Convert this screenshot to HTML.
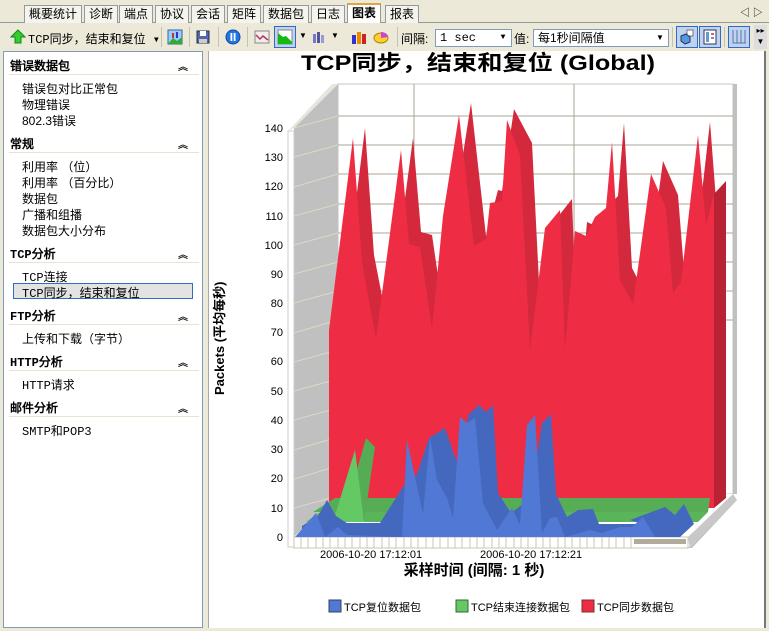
<!DOCTYPE html>
<html><head><meta charset="utf-8"><style>
*{margin:0;padding:0;box-sizing:border-box}
body{width:769px;height:631px;background:#ece9d8;font-family:"Liberation Sans","Noto Sans CJK SC",sans-serif;font-size:12px;position:relative;overflow:hidden}
.tabs{position:absolute;left:0;top:0;width:769px;height:23px;border-bottom:1px solid #919b9c}
.tab{position:absolute;top:5px;height:18px;border:1px solid #919b9c;border-bottom:none;background:#f4f3ee;font-size:12px;line-height:16px;padding:0 4px;color:#000}
.tb{position:absolute;left:0;top:23px;width:769px;height:27px;background:#ece9d8}
.left{position:absolute;left:3px;top:51px;width:200px;height:577px;background:#fff;border:1px solid #7f9db9}
.hd{position:absolute;left:6px;font-weight:bold;font-size:12px;font-family:"Liberation Mono","WenQuanYi Zen Hei",monospace}
.hl{position:absolute;left:5px;width:190px;border-top:1px solid #e8e4d4}
.it{position:absolute;left:18px;font-size:12px}
.car{position:absolute;left:174px;font-size:10px;font-weight:bold}
.chart{position:absolute;left:208px;top:51px;width:558px;height:577px;background:#fff;border-left:1px solid #aaa;border-right:2px solid #777}
.ic{position:absolute;top:29px;width:16px;height:16px}
.sep{position:absolute;top:27px;width:1px;height:20px;background:#c5c2b2}
.combo{position:absolute;top:29px;height:18px;background:#fff;border:1px solid #7f9db9;font-size:12px;line-height:16px;padding-left:4px}
.dd{position:absolute;right:1px;top:1px;width:14px;height:14px;font-size:8px;text-align:center;line-height:14px}
</style></head><body>
<div class="tabs">
<div class="tab" style="left:24px">概要统计</div>
<div class="tab" style="left:84px">诊断</div>
<div class="tab" style="left:119px">端点</div>
<div class="tab" style="left:155px">协议</div>
<div class="tab" style="left:191px">会话</div>
<div class="tab" style="left:227px">矩阵</div>
<div class="tab" style="left:263px">数据包</div>
<div class="tab" style="left:311px">日志</div>
<div class="tab" style="left:347px;top:3px;height:20px;background:#fff;font-weight:bold;border-top:2px solid #e6a23c">图表</div>
<div class="tab" style="left:385px">报表</div>
<div style="position:absolute;left:740px;top:4px;font-size:10px">◁ ▷</div>
</div>
<div class="tb">
<svg style="position:absolute;left:10px;top:6px" width="16" height="16"><polygon points="8,1 15,8 11,8 11,14 5,14 5,8 1,8" fill="#3c3" stroke="#181"/></svg>
<div style="position:absolute;left:28px;top:7px;font-size:12px;font-family:'Liberation Mono','WenQuanYi Zen Hei',monospace">TCP同步，结束和复位 ▾</div>
</div>
<div class="sep" style="left:161px"></div>
<svg class="ic" style="left:167px" viewBox="0 0 16 16"><rect x="1" y="1" width="14" height="14" fill="#9cf" stroke="#369"/><path d="M1 15 L6 9 L10 12 L15 8 V15Z" fill="#3a3"/><rect x="5" y="4" width="2" height="5" fill="#c33"/><rect x="9" y="3" width="2" height="6" fill="#33c"/></svg>
<div class="sep" style="left:189px"></div>
<svg class="ic" style="left:195px" viewBox="0 0 16 16"><rect x="2" y="2" width="12" height="12" fill="#56a" stroke="#234"/><rect x="5" y="2" width="6" height="5" fill="#fff"/><rect x="4" y="10" width="8" height="4" fill="#ccc"/></svg>
<div class="sep" style="left:218px"></div>
<svg class="ic" style="left:225px" viewBox="0 0 16 16"><circle cx="8" cy="8" r="7" fill="#27d" stroke="#14a"/><rect x="5.5" y="4" width="1.8" height="8" fill="#fff"/><rect x="8.7" y="4" width="1.8" height="8" fill="#fff"/></svg>
<div class="sep" style="left:247px"></div>
<svg class="ic" style="left:254px" viewBox="0 0 16 16"><rect x="1" y="2" width="14" height="12" fill="#eee" stroke="#888"/><path d="M2 6 L6 10 L9 7 L14 11" stroke="#b35" fill="none" stroke-width="1.5"/></svg>
<div style="position:absolute;left:274px;top:26px;width:22px;height:22px;border:1px solid #316ac5;background:#c1d2ee"></div>
<svg class="ic" style="left:277px" viewBox="0 0 16 16"><rect x="1" y="1" width="14" height="14" fill="#fff" stroke="#888"/><path d="M1 4 L6 8 L9 7 L15 13 V15 H1Z" fill="#1b1"/></svg>
<div style="position:absolute;left:299px;top:31px;font-size:8px">▼</div>
<svg class="ic" style="left:311px" viewBox="0 0 16 16"><rect x="2" y="5" width="3" height="9" fill="#77c"/><rect x="6" y="3" width="3" height="11" fill="#559"/><rect x="10" y="6" width="3" height="8" fill="#99d"/></svg>
<div style="position:absolute;left:331px;top:31px;font-size:8px">▼</div>
<svg class="ic" style="left:351px" viewBox="0 0 16 16"><rect x="1" y="6" width="4" height="9" fill="#33c"/><rect x="6" y="3" width="4" height="12" fill="#e80"/><rect x="11" y="5" width="4" height="10" fill="#c22"/></svg>
<svg class="ic" style="left:373px" viewBox="0 0 16 16"><ellipse cx="8" cy="9" rx="7" ry="5" fill="#fc3" stroke="#a80"/><path d="M8 9 L8 3 A7 5 0 0 1 15 8Z" fill="#c4c"/></svg>
<div class="sep" style="left:397px"></div>
<div style="position:absolute;left:401px;top:30px">间隔:</div>
<div class="combo" style="left:435px;width:77px;font-family:'Liberation Mono',monospace">1 sec<div class="dd">▼</div></div>
<div style="position:absolute;left:514px;top:30px">值:</div>
<div class="combo" style="left:533px;width:136px">每1秒间隔值<div class="dd">▼</div></div>
<div class="sep" style="left:672px"></div>
<div style="position:absolute;left:676px;top:26px;width:22px;height:22px;border:1px solid #316ac5;background:#c1d2ee"></div>
<svg class="ic" style="left:679px" viewBox="0 0 16 16"><rect x="8" y="1" width="6" height="6" fill="#fff" stroke="#777"/><path d="M2 7 L7 5 L11 8 L11 13 L6 15 L2 12Z" fill="#59d" stroke="#236"/></svg>
<div style="position:absolute;left:699px;top:26px;width:22px;height:22px;border:1px solid #316ac5;background:#c1d2ee"></div>
<svg class="ic" style="left:702px" viewBox="0 0 16 16"><rect x="2" y="1" width="12" height="14" fill="#fff" stroke="#336"/><rect x="4" y="3" width="3" height="10" fill="#69c"/><rect x="9" y="4" width="3" height="2" fill="#c66"/><rect x="9" y="8" width="3" height="2" fill="#69c"/></svg>
<div class="sep" style="left:724px"></div>
<div style="position:absolute;left:728px;top:26px;width:22px;height:22px;border:1px solid #316ac5;background:#c1d2ee"></div>
<svg class="ic" style="left:731px" viewBox="0 0 16 16"><path d="M2 1 V14 H15 M6 1 V14 M10 1 V14 M14 1V14" stroke="#57a" fill="none"/></svg>
<div style="position:absolute;left:754px;top:25px;width:13px;height:24px;background:#ddd;font-size:8px;text-align:center;line-height:11px">▸▸<br>▼</div>

<div class="left">
<div class="hd" style="top:5px">错误数据包</div><div class="car" style="top:6px">︽</div><div class="hl" style="top:22px"></div>
<div class="it" style="top:28px">错误包对比正常包</div>
<div class="it" style="top:44px">物理错误</div>
<div class="it" style="top:60px">802.3错误</div>
<div class="hd" style="top:83px">常规</div><div class="car" style="top:84px">︽</div><div class="hl" style="top:100px"></div>
<div class="it" style="top:106px">利用率 （位）</div>
<div class="it" style="top:122px">利用率 （百分比）</div>
<div class="it" style="top:138px">数据包</div>
<div class="it" style="top:154px">广播和组播</div>
<div class="it" style="top:170px">数据包大小分布</div>
<div class="hd" style="top:193px">TCP分析</div><div class="car" style="top:194px">︽</div><div class="hl" style="top:210px"></div>
<div class="it" style="top:216px;font-family:'Liberation Mono','WenQuanYi Zen Hei',monospace">TCP连接</div>
<div style="position:absolute;left:9px;top:231px;width:180px;height:16px;background:#e3e3e3;border:1px solid #316ac5"></div>
<div class="it" style="top:232px;font-family:'Liberation Mono','WenQuanYi Zen Hei',monospace">TCP同步，结束和复位</div>
<div class="hd" style="top:255px">FTP分析</div><div class="car" style="top:256px">︽</div><div class="hl" style="top:272px"></div>
<div class="it" style="top:278px">上传和下载（字节）</div>
<div class="hd" style="top:301px">HTTP分析</div><div class="car" style="top:302px">︽</div><div class="hl" style="top:318px"></div>
<div class="it" style="top:324px;font-family:'Liberation Mono','WenQuanYi Zen Hei',monospace">HTTP请求</div>
<div class="hd" style="top:347px">邮件分析</div><div class="car" style="top:348px">︽</div><div class="hl" style="top:364px"></div>
<div class="it" style="top:370px;font-family:'Liberation Mono','WenQuanYi Zen Hei',monospace">SMTP和POP3</div>
</div>

<div class="chart"></div>
<svg style="position:absolute;left:0;top:0" width="769" height="631" font-family="Liberation Sans, Noto Sans CJK SC, sans-serif">
<text x="301" y="70" font-size="21" font-weight="bold" textLength="354" lengthAdjust="spacingAndGlyphs">TCP同步，结束和复位 (Global)</text>
<!-- back wall -->
<rect x="338" y="84" width="395" height="410" fill="#fff" stroke="#c8c4b8"/>
<rect x="733" y="84" width="4" height="412" fill="#c0c0c0"/>
<g stroke="#aaa496" stroke-width="1">
<line x1="338" y1="116" x2="733" y2="116"/><line x1="338" y1="145" x2="733" y2="145"/><line x1="338" y1="174" x2="733" y2="174"/><line x1="338" y1="204" x2="733" y2="204"/><line x1="338" y1="233" x2="733" y2="233"/><line x1="338" y1="262" x2="733" y2="262"/><line x1="338" y1="291" x2="733" y2="291"/><line x1="338" y1="320" x2="733" y2="320"/>
<line x1="414" y1="84" x2="414" y2="494"/><line x1="574" y1="84" x2="574" y2="494"/>
</g>
<!-- left side wall -->
<polygon points="294,128 338,84 338,494 294,537" fill="#c0c0c0"/>
<polygon points="288,131 294,128 338,84 332,84" fill="#e8e6dc"/>
<rect x="288" y="131" width="6" height="416" fill="#fff" stroke="#ccc"/>
<g stroke="#ddd8c4">
<line x1="294" y1="128" x2="338" y2="116"/><line x1="294" y1="157" x2="338" y2="145"/><line x1="294" y1="187" x2="338" y2="174"/><line x1="294" y1="216" x2="338" y2="204"/><line x1="294" y1="245" x2="338" y2="233"/><line x1="294" y1="274" x2="338" y2="262"/><line x1="294" y1="303" x2="338" y2="291"/><line x1="294" y1="333" x2="338" y2="320"/><line x1="294" y1="362" x2="338" y2="350"/><line x1="294" y1="391" x2="338" y2="379"/><line x1="294" y1="420" x2="338" y2="408"/><line x1="294" y1="450" x2="338" y2="437"/><line x1="294" y1="479" x2="338" y2="466"/><line x1="294" y1="508" x2="338" y2="496"/>
</g>
<g font-size="11" text-anchor="end">
<text x="283" y="132">140</text><text x="283" y="161">130</text><text x="283" y="190">120</text><text x="283" y="220">110</text><text x="283" y="249">100</text><text x="283" y="278">90</text><text x="283" y="307">80</text><text x="283" y="336">70</text><text x="283" y="365">60</text><text x="283" y="395">50</text><text x="283" y="424">40</text><text x="283" y="453">30</text><text x="283" y="482">20</text><text x="283" y="512">10</text><text x="283" y="541">0</text>
</g>
<!-- floor -->
<polygon points="294,537 338,494 737,494 737,502 690,548 294,548" fill="#fff"/>
<polygon points="688,548 733,500 737,500 692,548" fill="#c0c0c0"/>
<polygon points="688,537 733,494 737,500 690,548" fill="#c8c8c8"/>
<rect x="294" y="537" width="394" height="11" fill="#fff" stroke="#c8c4b4"/>
<g stroke="#c8c4b4"><path d="M301 537V548M308 537V548M316 537V548M323 537V548M330 537V548M338 537V548M345 537V548M352 537V548M360 537V548M367 537V548M374 537V548M382 537V548M389 537V548M396 537V548M404 537V548M411 537V548M418 537V548M426 537V548M433 537V548M440 537V548M448 537V548M455 537V548M462 537V548M470 537V548M477 537V548M484 537V548M492 537V548M499 537V548M506 537V548M514 537V548M521 537V548M528 537V548M536 537V548M543 537V548M550 537V548M558 537V548M565 537V548M572 537V548M580 537V548M587 537V548M594 537V548M602 537V548M609 537V548M616 537V548M624 537V548M631 537V548"/></g>
<rect x="634" y="539" width="52" height="5" fill="#b0ab9c"/>
<!-- red -->
<polygon points="341,322 365,128 374,255 388,327 413,138 421,232 432,235 444,317 455,206 471,103 486,236 498,190 502,191 514,109 532,143 542,342 557,218 572,199 577,340 587,222 598,227 607,207 618,196 624,123 632,268 645,293 663,161 678,195 685,283 693,271 710,122 718,226 726,181 726,498 341,498" fill="#d4283c"/>
<polygon points="329,330 353,138 362,262 376,339 401,150 409,244 420,247 432,329 443,216 459,115 474,246 486,239 490,203 502,201 507,120 520,155 530,350 545,228 560,210 565,350 575,231 586,236 595,217 606,208 612,142 620,280 633,304 651,174 666,208 673,293 681,282 698,135 706,225 714,194 714,508 329,508" fill="#ee2d44"/>
<polygon points="714,194 726,181 726,498 714,508" fill="#b82232"/>
<!-- green -->
<polygon points="313,512 335,498 710,498 708,512" fill="#56ad56"/>
<polygon points="306,522 320,512 708,512 698,522" fill="#5ab45a"/>
<polygon points="345,512 366,438 375,447 364,522" fill="#55ac55"/>
<polygon points="333,522 355,450 364,522" fill="#64c864"/>
<!-- blue -->
<polygon points="302,526 318,516 327,500 336,516 342,520 347,523 380,523 406,482 417,474 429,438 445,428 455,457 462,475 468,415 479,405 486,412 493,405 498,493 511,513 523,504 531,496 542,423 551,414 556,494 567,517 578,510 593,509 599,524 642,524 630,520 665,507 675,515 684,504 694,524 680,537 302,537" fill="#4468be"/>
<polygon points="295,537 316,513 325,537 338,527 347,535 402,537 407,440 423,514 430,437 437,480 447,498 453,518 460,417 467,423 475,418 483,503 497,530 512,508 520,525 527,425 535,415 542,533 550,518 557,517 565,537 590,530 602,533 620,527 632,527 643,517 655,537" fill="#5078d4"/>
<!-- axis titles -->
<text transform="translate(224,395) rotate(-90)" font-size="13" font-weight="bold">Packets (平均每秒)</text>
<text x="320" y="558" font-size="11">2006-10-20 17:12:01</text>
<text x="480" y="558" font-size="11">2006-10-20 17:12:21</text>
<text x="474" y="575" font-size="15" font-weight="bold" text-anchor="middle">采样时间 (间隔: 1 秒)</text>
<!-- legend -->
<rect x="329" y="600" width="12" height="12" fill="#5078d4" stroke="#345"/>
<text x="344" y="611" font-size="11">TCP复位数据包</text>
<rect x="456" y="600" width="12" height="12" fill="#64c864" stroke="#363"/>
<text x="471" y="611" font-size="11">TCP结束连接数据包</text>
<rect x="582" y="600" width="12" height="12" fill="#ee2d44" stroke="#733"/>
<text x="597" y="611" font-size="11">TCP同步数据包</text>
</svg>
</body></html>
